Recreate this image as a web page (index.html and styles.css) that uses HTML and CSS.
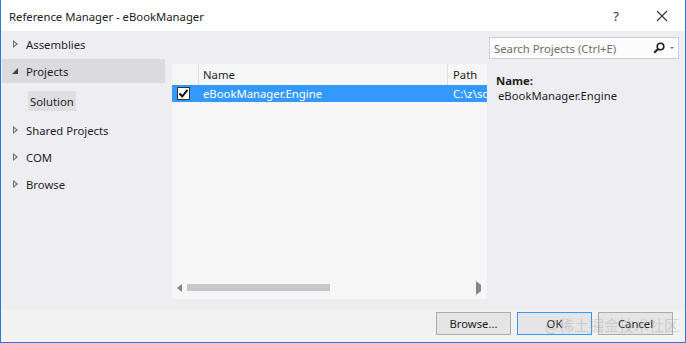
FILE: index.html
```html
<!DOCTYPE html>
<html>
<head>
<meta charset="utf-8">
<link rel="stylesheet" href="styles.css">
</head>
<body>
<div class="window">
  <div class="titlebar">
    <span class="title">Reference Manager - eBookManager</span>
    <span class="tb-help">?</span>
    <span class="tb-close"><svg width="12" height="12" viewBox="0 0 12 12"><path d="M1 1L11 11M11 1L1 11" stroke="#333" stroke-width="1.1" fill="none"/></svg></span>
  </div>
  <div class="main">
    <nav class="nav">
      <div class="nav-item"><span class="arrow collapsed"></span>Assemblies</div>
      <div class="nav-item selected"><span class="arrow expanded"></span>Projects</div>
      <div class="nav-sub"><span class="sub-label">Solution</span></div>
      <div class="nav-item"><span class="arrow collapsed"></span>Shared Projects</div>
      <div class="nav-item"><span class="arrow collapsed"></span>COM</div>
      <div class="nav-item"><span class="arrow collapsed"></span>Browse</div>
    </nav>
    <section class="center">
      <div class="list">
        <div class="list-head">
          <div class="col-check"></div>
          <div class="col-name">Name</div>
          <div class="col-path">Path</div>
        </div>
        <div class="list-row selected">
          <div class="col-check"><span class="checkbox"><svg width="11" height="11" viewBox="0 0 11 11"><path d="M1.5 5.5L4.2 8.5L9.5 1.8" stroke="#111" stroke-width="2" fill="none"/></svg></span></div>
          <div class="col-name">eBookManager.Engine</div>
          <div class="col-path">C:\z\source</div>
        </div>
        <div class="list-fill"></div>
        <div class="hscroll">
          <span class="sa left"></span>
          <div class="track"><div class="thumb"></div></div>
          <span class="sa right"></span>
        </div>
      </div>
    </section>
    <aside class="right">
      <div class="search">
        <span class="search-ph">Search Projects (Ctrl+E)</span>
        <span class="search-icon"><svg width="12" height="12" viewBox="0 0 12 12"><circle cx="7.5" cy="4.5" r="3.3" stroke="#1e1e1e" stroke-width="1.6" fill="none"/><path d="M5.2 6.8L1.2 10.8" stroke="#1e1e1e" stroke-width="2"/></svg></span>
        <span class="search-drop"></span>
      </div>
      <div class="detail">
        <div class="detail-label">Name:</div>
        <div class="detail-value">eBookManager.Engine</div>
      </div>
    </aside>
  </div>
  <div class="footer">
    <button class="btn">Browse...</button>
    <button class="btn default">OK</button>
    <button class="btn">Cancel</button>
    <span class="watermark">@稀土掘金技术社区</span>
  </div>
</div>
</body>
</html>
```
FILE: styles.css
```css
html, body {
  margin: 0;
  padding: 0;
}
body {
  font-family: "Noto Sans", "Liberation Sans", sans-serif;
  font-size: 11.3px;
  color: #1e1e1e;
}
.window {
  width: 686px;
  height: 343px;
  box-sizing: border-box;
  border: 1px solid #2b7bd0;
  border-top: none;
  display: flex;
  flex-direction: column;
  background: #eeeef2;
  position: relative;
  overflow: hidden;
}
.titlebar {
  height: 31px;
  flex: none;
  background: #ffffff;
  display: flex;
  align-items: center;
  padding-left: 8px;
  padding-top: 1px;
  box-sizing: border-box;
}
.title {
  flex: 1;
  color: #1b1b1b;
}
.tb-help {
  width: 46px;
  text-align: center;
  font-size: 13px;
  color: #333;
}
.tb-close {
  width: 46px;
  display: flex;
  justify-content: center;
  align-items: center;
}
.main {
  flex: 1;
  display: flex;
  min-height: 0;
}
.nav {
  width: 164px;
  flex: none;
  padding-top: 1px;
  display: flex;
  flex-direction: column;
}
.nav-item {
  height: 24px;
  display: flex;
  align-items: center;
  margin-bottom: 3px;
  padding-left: 10px;
  margin-left: 1px;
}
.nav-item.selected {
  background: #dadadf;
}
.arrow {
  width: 14px;
  height: 10px;
  display: inline-block;
  position: relative;
}
.arrow.collapsed::before {
  content: "";
  position: absolute;
  left: 1px;
  top: 1px;
  border-left: 5px solid #6d6d6d;
  border-top: 4px solid transparent;
  border-bottom: 4px solid transparent;
}
.arrow.collapsed::after {
  content: "";
  position: absolute;
  left: 2px;
  top: 3px;
  border-left: 2px solid #eeeef2;
  border-top: 2px solid transparent;
  border-bottom: 2px solid transparent;
}
.arrow.expanded::before {
  content: "";
  position: absolute;
  left: 0;
  top: 2px;
  border-right: 6px solid #424242;
  border-top: 6px solid transparent;
}
.nav-sub {
  height: 20px;
  margin-top: 5px;
  margin-bottom: 7px;
  padding-left: 27px;
  display: flex;
}
.sub-label {
  background: #dedee3;
  padding: 0 2px;
  display: flex;
  align-items: center;
}
.center {
  width: 315px;
  flex: none;
  margin-left: 7px;
  padding-top: 33px;
  padding-bottom: 11px;
  display: flex;
  min-width: 0;
}
.list {
  flex: 1;
  min-width: 0;
  background: #f6f6f6;
  display: flex;
  flex-direction: column;
  overflow: hidden;
}
.list-head, .list-row {
  display: flex;
  height: 21px;
  align-items: stretch;
}
.list-head {
  color: #1e1e1e;
}
.list-head .col-check,
.list-head .col-name {
  border-right: 1px solid #e0e0e3;
}
.col-check {
  width: 27px;
  flex: none;
  display: flex;
  align-items: center;
  padding-left: 5px;
  box-sizing: border-box;
}
.col-name {
  width: 249px;
  flex: none;
  padding-left: 4px;
  box-sizing: border-box;
  display: flex;
  align-items: center;
}
.col-path {
  flex: 1;
  min-width: 0;
  padding-left: 5px;
  display: flex;
  align-items: center;
  overflow: hidden;
  white-space: nowrap;
}
.list-row {
  height: 17px;
}
.list-row.selected {
  background: #3399ff;
  color: #ffffff;
}
.checkbox {
  width: 13px;
  height: 13px;
  box-sizing: border-box;
  background: #ffffff;
  border: 1px solid #333;
  display: flex;
  align-items: center;
  justify-content: center;
}
.list-fill {
  flex: 1;
}
.hscroll {
  height: 17px;
  display: grid;
  grid-template-columns: 5px 1fr 5px;
  align-items: center;
  padding: 0 6px 3px 5px;
}
.sa {
  display: block;
  width: 0;
  height: 0;
  border-top: 4px solid transparent;
  border-bottom: 4px solid transparent;
}
.sa.left {
  border-right: 5px solid #868686;
}
.sa.right {
  border-left: 5px solid #868686;
}
.track {
  height: 7px;
  padding: 0 5px;
}
.thumb {
  width: 143px;
  height: 7px;
  background: #c6c6cc;
}
.right {
  flex: 1;
  min-width: 0;
  padding: 6px 6px 0 2px;
  display: flex;
  flex-direction: column;
}
.search {
  height: 22px;
  box-sizing: border-box;
  border: 1px solid #cccedb;
  background: #fcfcfc;
  display: flex;
  align-items: center;
  padding-left: 4px;
  padding-right: 4px;
}
.search-ph {
  flex: 1;
  color: #6d6d6d;
}
.search-icon {
  display: flex;
  margin-right: 5px;
}
.search-drop {
  width: 0;
  height: 0;
  border-left: 2px solid transparent;
  border-right: 2px solid transparent;
  border-top: 2px solid #717171;
}
.detail {
  padding-left: 7px;
  padding-top: 14px;
}
.detail-label {
  font-weight: bold;
  line-height: 15px;
}
.detail-value {
  padding-left: 2px;
  line-height: 15px;
}
.footer {
  height: 32px;
  flex: none;
  background: #f2f2f2;
  display: flex;
  justify-content: flex-end;
  align-items: flex-start;
  padding-top: 2px;
  padding-right: 12px;
  gap: 6px;
  box-sizing: border-box;
}
.btn {
  width: 75px;
  height: 23px;
  font-family: inherit;
  font-size: 11.3px;
  color: #1e1e1e;
  background: #e5e5e5;
  border: 1px solid #acacac;
  padding: 0;
  margin: 0;
}
.btn.default {
  border-color: #3399ff;
}
.watermark {
  position: absolute;
  right: 6px;
  bottom: 7px;
  font-family: "Noto Sans CJK SC", sans-serif;
  font-size: 15px;
  color: rgba(160, 160, 160, 0.4);
  pointer-events: none;
}
```
